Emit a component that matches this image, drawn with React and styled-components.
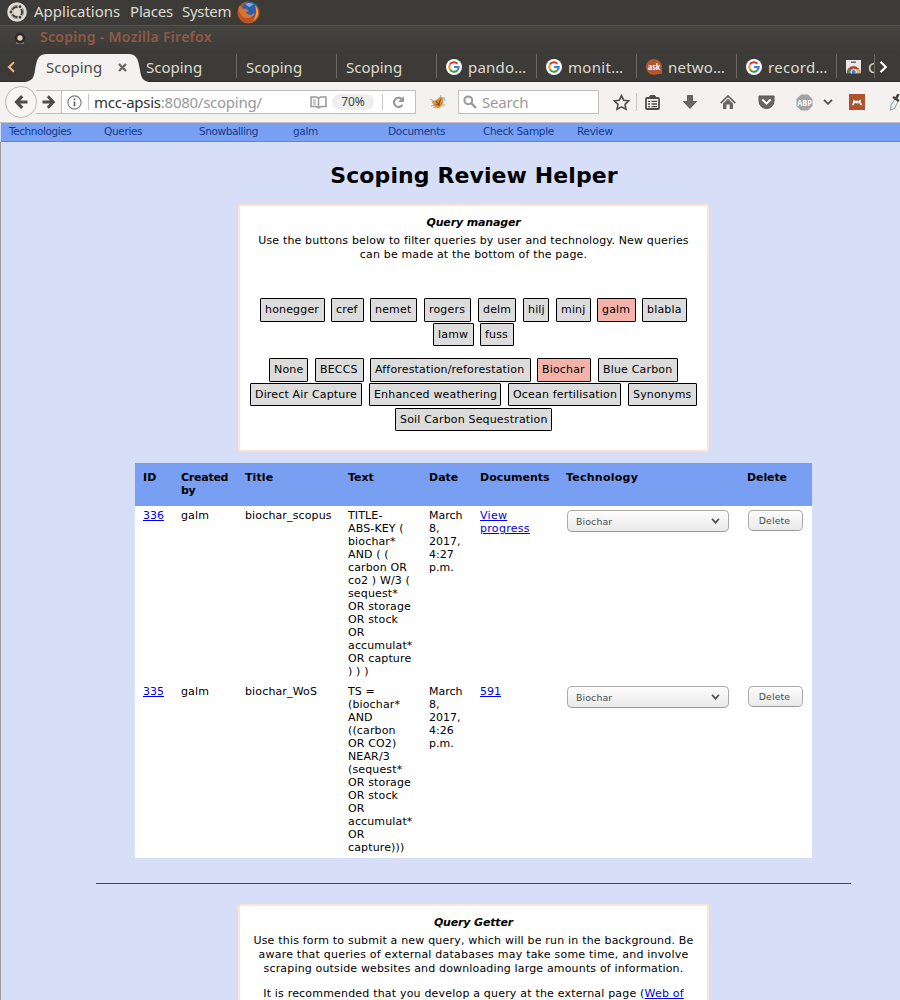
import React from 'react';
import styled, { createGlobalStyle, css } from 'styled-components';

const Global = createGlobalStyle`
  * { box-sizing: border-box; }
  body { margin: 0; width: 900px; height: 1000px; overflow: hidden; background: #d6dff7; font-family: "DejaVu Sans", sans-serif; }
  svg { display: block; flex: none; }
`;
const Screen = styled.div`width: 900px; height: 1000px; overflow: hidden; background: #d6dff7;`;
const ui = css`font-family: "Noto Sans", "Open Sans", sans-serif;`;
const Label = styled.span`
  display: block; flex: none; white-space: nowrap; width: ${p => p.$w}px; margin-left: ${p => p.$gap || 0}px;
  letter-spacing: ${p => p.$ls || 0}px;
`;
const Gap = styled.i`flex: none; width: ${p => p.$w}px;`;
const Panel = styled.header`
  ${ui} height: 25px; background: #3c3b37; color: #dfdbd2; display: flex; align-items: center; padding: 0 0 1px 7px; font-size: 15px; line-height: 20px;
  ${Label} { padding-bottom: 2px; }
`;
const TitleBar = styled.div`
  ${ui} height: 27px; display: flex; align-items: center; padding: 0 0 2px 14px; background: linear-gradient(#45443f, #3c3b37); border-top: 1px solid #55524b;
  color: #8f5a48; font-weight: 600; font-size: 14px; line-height: 20px;
  ${Label} { padding-bottom: 2px; }
`;
const Tabs = styled.div`
  ${ui} height: 30px; background: #3c3b37; color: #dfdbd2; font-size: 15px; display: flex; align-items: stretch; border-bottom: 1px solid #2a2926; line-height: 32px;
`;
const Scroll = styled.div`width: ${p => p.$w}px; flex: none; display: flex; align-items: center; padding-left: ${p => p.$pad}px;`;
const ActiveTab = styled.div`
  width: 113px; height: 30px; flex: none; display: flex; align-items: center; color: #4c4c4c; position: relative; padding-left: 22px; isolation: isolate;
  > svg:first-child { position: absolute; left: 0; top: 0; z-index: -1; }
`;
const Tab = styled.div`
  width: ${p => p.$w || 100}px; flex: none; display: flex; align-items: center; padding-left: 9px; overflow: hidden;
  border-right: 1px solid transparent; border-image: linear-gradient(transparent 10%, #6b6a66 10%, #6b6a66 86%, transparent 86%) 1;
`;
const Toolbar = styled.div`
  ${ui} height: 41px; background: #f3f2f1; border-bottom: 1px solid #c3c1be; display: flex; align-items: center; padding: 0 0 0 5px; overflow: hidden;
`;
const Back = styled.div`
  width: 32px; height: 32px; flex: none; border: 1px solid #bbb8b3; border-radius: 50%; background: #f7f6f5; display: flex; align-items: center; justify-content: center; z-index: 1;
`;
const UrlBar = styled.div`
  width: 380px; height: 24px; margin-left: -1px; flex: none; border: 1px solid #c1bfbb; border-left: 0; background: #fff; display: flex; align-items: center; font-size: 15px; color: #999;
`;
const Forward = styled.div`width: 26px; height: 22px; flex: none; background: #f7f6f5; border-right: 1px solid #c1bfbb; display: flex; align-items: center; padding-left: 5px;`;
const Dark = styled.span`color: #333;`;
const Zoom = styled.div`width: 42px; height: 16px; border-radius: 8px; background: #eee; color: #444; font-size: 12px; line-height: 16px; text-align: center; flex: none;`;
const Rule = styled.i`width: 1px; height: ${p => p.$h}px; background: #c9c7c4; flex: none;`;
const Search = styled.div`width: 141px; height: 24px; flex: none; border: 1px solid #c1bfbb; background: #fff; display: flex; align-items: center; color: #999; font-size: 15px; padding-left: 4px;`;
const Nav = styled.nav`
  height: 19px; background: #799ff2; border-bottom: 1px solid #5f86d8; color: #123a8c; display: flex; padding-left: 8px; font-size: 10.5px; line-height: 17px; margin-left: 1px;
`;
const Page = styled.main`border-left: 1px solid #9a9a9a; height: 858px; display: flex; flex-direction: column; align-items: flex-start; font-size: 11px; color: #000;`;
const Title = styled.h1`margin: 20px 0 0; width: 946px; text-align: center; font-size: 22px; line-height: 28px; height: 42px; flex: none; letter-spacing: 0.1px; white-space: nowrap;`;
const Box = styled.section`
  width: 471px; height: ${p => p.$h}px; margin-left: 237px; flex: none; background: #fff; border: 2px solid #ffe4cf; border-radius: 3px; padding-top: 10px; text-align: center;
`;
const BoxTitle = styled.h2`margin: 0 0 4px; font-size: 11px; line-height: 14px; font-style: italic; font-weight: bold; letter-spacing: -0.15px;`;
const Para = styled.p`margin: 0 -20px; line-height: 14px; white-space: nowrap; letter-spacing: 0.19px; & + & { margin-top: 11px; }`;
const Line = styled.span`display: block; letter-spacing: ${p => p.$ls ? p.$ls + 'px' : 'inherit'};`;
const Tags = styled.div`display: flex; margin: ${p => p.$top}px 0 0 ${p => p.$left}px;`;
const Tag = styled.span`
  display: block; flex: none; width: ${p => p.$w}px; height: ${p => p.$h}px; margin-right: ${p => p.$gap || 6}px; border: 1px solid #000; border-radius: 1px;
  background: ${p => p.$on ? '#f4b2a9' : '#dcdcdc'}; line-height: 21px; padding-left: 4px; text-align: left; white-space: nowrap; letter-spacing: 0.17px;
`;
const Table = styled.div`width: 677px; margin: 11px 0 0 134px; flex: none; line-height: 13px; background: #fff; letter-spacing: 0.14px;`;
const Row = styled.div`
  display: grid; grid-template-columns: 38px 64px 103px 81px 51px 86px 181px 73px; height: ${p => p.$head ? 43 : 176}px; padding-top: ${p => p.$head ? 8 : 3}px;
  background: ${p => p.$head ? '#799ff2' : '#fff'}; font-weight: ${p => p.$head ? 'bold' : 'normal'};
`;
const Cell = styled.div`padding-left: 8px; white-space: nowrap; letter-spacing: ${p => p.$ls === undefined ? 'inherit' : p.$ls + 'px'};`;
const Link = styled.a`color: #0000ee; text-decoration: underline;`;
const Control = styled.div`
  margin-top: 1px; margin-left: 1px; width: ${p => p.$w}px; height: ${p => p.$h}px; border: 1px solid #aaa; border-bottom-color: #999; border-radius: 5px;
  background: linear-gradient(#fdfdfd, #e9e9e9); color: #4c4c4c; font-size: 9.33px; display: flex; align-items: center; justify-content: ${p => p.$select ? 'space-between' : 'center'};
  padding: ${p => p.$select ? '0 8px' : '0 2px 0 0'};
`;
const Divider = styled.hr`width: 755px; height: 1px; border: 0; background: #4a4a4a; margin: 25px 0 20px 95px; flex: none;`;

const Svg = ({ w = 16, h = 16, children, ...r }) => <svg width={w} height={h} viewBox={`0 0 ${w} ${h}`} fill="none" {...r}>{children}</svg>;
const Ubuntu = () => <Svg w={20} h={20}><circle cx="10" cy="10" r="9.8" fill="#dfdbd2" /><circle cx="10" cy="10" r="5" stroke="#3c3b37" strokeWidth="2" /><circle cx="10" cy="10" r="6.6" stroke="#3c3b37" strokeWidth=".5" /><g fill="#3c3b37" stroke="#dfdbd2" strokeWidth="1.1"><circle cx="4" cy="10" r="2" /><circle cx="13" cy="4.8" r="2" /><circle cx="13" cy="15.2" r="2" /></g></Svg>;
const Firefox = () => <Svg w={23} h={23}><circle cx="11.5" cy="11.5" r="11" fill="#b95328" /><circle cx="12.7" cy="9" r="8" fill="#2b5fae" /><path d="M8 3c3-2 8-1 9 1-3-1-2 2-5 2z" fill="#76b2de" /><path d="M2 5c2 0 3 1 4 3 2-1 4 0 6 2l-3 1c1 3 5 4 9 1-1 5-9 7-13 3-3-3-4-6-3-10z" fill="#d9722e" /><path d="M18 4c5 5 4 13-2 16 3-4 4-10 2-16z" fill="#e8a33c" /></Svg>;
const Google = () => <Svg><circle cx="8" cy="8" r="8" fill="#fff" /><g strokeWidth="2.1"><path d="M4 5.5A4.7 4.7 0 0 1 11.4 4.7" stroke="#c5432e" /><path d="M4 5.5a4.7 4.7 0 0 0 0 5" stroke="#e8a33c" /><path d="M4 10.5a4.7 4.7 0 0 0 7.2 1" stroke="#3c9a55" /><path d="M8 8h4.7a4.7 4.7 0 0 1-1.5 3.5" stroke="#3f7fe0" /></g></Svg>;
const Ask = () => <Svg><circle cx="8" cy="8" r="8" fill="#b4552d" /><path d="M10 15h6V9z" fill="#b4552d" /><text x="8" y="10.6" textAnchor="middle" fontSize="8" fontWeight="700" fontFamily="Open Sans" textLength="12.5" lengthAdjust="spacingAndGlyphs" fill="#fff">ask</text></Svg>;
const Store = () => <Svg><path d="M0 1h15v13.5H0z" fill="#e8e8e8" /><path d="M5 3.2h5" stroke="#444" strokeWidth="1.2" /><path d="M.5 14.5a7 7.5 0 0 1 14 0z" fill="#b94a30" /><path d="M.8 14.5q0-3 1.7-5l3.7 5z" fill="#438f55" /><path d="M14.3 14.5q0-2.6-1.6-4.3H8.5l1 4.3z" fill="#e3b548" /><circle cx="7.6" cy="13" r="2.7" fill="#3f7fe0" stroke="#fff" /><path d="M0 14.5h16V16H0z" fill="#3c3b37" /></Svg>;
const Arrow = ({ flip }) => <Svg w={15} h={14} transform={flip ? 'scale(-1 1)' : undefined}><path d="M8.2 1.2 2.6 7l5.6 5.8M3 7h10.5" stroke="#4d4d4d" strokeWidth={flip ? 2.8 : 3.2} /></Svg>;
const Info = () => <Svg w={15} h={15}><circle cx="7.5" cy="7.5" r="6.6" stroke="#777" strokeWidth="1.1" /><path d="M7.5 6.6v4.6M7.5 3.6v1.7" stroke="#666" strokeWidth="1.7" /></Svg>;
const Reader = () => <Svg w={17} h={14}><path d="M1 2h5.5l2 1.3L10.5 2H16v9.5h-5l-2.5 1.3L6 11.5H1zM8.5 3v9" stroke="#999" strokeWidth="1.5" /><path d="M3 5h3M3 7h3M3 9h3" stroke="#999" /></Svg>;
const Reload = () => <Svg w={13} h={13}><path d="M10.5 8.8A4.6 4.6 0 1 1 9.7 3" stroke="#999" strokeWidth="2.1" /><path d="M12 0v6H6z" fill="#999" /></Svg>;
const Bug = () => <Svg w={17} h={16}><path d="M1 5l5 3M12 1l-2 5M15 3l1 4M2 12l4-1M14 13l2-3M4 13l3 1" stroke="#a5a5a5" strokeWidth=".9" /><path d="M2.5 7.5 7 6l5-3.5L14.5 4l-.7 7-4 3.5-4-1.5z" fill="#d5963d" /><path d="M7 7l4 4M11.5 5l-2 7M6.5 11l4-1.5" stroke="#984e25" strokeWidth="1.2" /></Svg>;
const Magnifier = () => <Svg w={14} h={14}><circle cx="5.3" cy="5.3" r="3.9" stroke="#999" strokeWidth="2" /><path d="M8.2 8.2 13 13" stroke="#999" strokeWidth="2.4" /></Svg>;
const Star = () => <Svg w={17} h={17}><path d="M8.5 1.6l2.2 4.6 5 .6-3.7 3.5 1 5-4.5-2.5L4 15.3l1-5L1.3 6.8l5-.6z" stroke="#4d4d4d" strokeWidth="1.6" /></Svg>;
const Clip = () => <Svg w={15} h={15}><rect x="1" y="3" width="13" height="11" rx="1" stroke="#4d4d4d" strokeWidth="1.8" /><path d="M4.5 2.2a3 2.3 0 0 1 6 0z" fill="#4d4d4d" stroke="#4d4d4d" /><path d="M3 6.4h2M6.5 6.4H12M3 9h2M6.5 9H12M3 11.6h2M6.5 11.6H12" stroke="#4d4d4d" strokeWidth="1.3" /></Svg>;
const Down = () => <Svg w={14} h={14}><path d="M4.5.5h5v6h4L7 13.5.5 6.5h4z" fill="#666" stroke="#4d4d4d" strokeWidth=".8" /></Svg>;
const Home = () => <Svg w={16} h={15}><path d="M.8 8 8 1l7.2 7" stroke="#555" strokeWidth="1.6" /><path d="M3 8.6l5-4.8 5 4.8V14H9.7V9.5H6.4V14H3z" fill="#666" /></Svg>;
const Pocket = () => <Svg w={17} h={15}><path d="M1 1h15v5a7.5 7.5 0 0 1-15 0z" fill="#666" stroke="#555" /><path d="M4.3 4.5 8.5 8.6l4.2-4.1" stroke="#fff" strokeWidth="2" /></Svg>;
const Abp = () => <Svg w={17} h={17}><path d="M5 .5h7l4.5 4.5v7L12 16.5H5L.5 12V5z" fill="#a3a3a3" /><text x="8.5" y="11.6" textAnchor="middle" fontSize="8.5" fontWeight="700" fontFamily="Open Sans" textLength="14.5" lengthAdjust="spacingAndGlyphs" fill="#fff">ABP</text></Svg>;
const Chevron = ({ c = '#4d4d4d', w = 10, s = 1.7 }) => <Svg w={w} h={6}><path d={`M1 .8 ${w / 2} 4.8 ${w - 1} .8`} stroke={c} strokeWidth={s} /></Svg>;
const Mendeley = () => <Svg><path d="M0 0h16v16H0z" fill="#ad532d" /><path d="M4.2 10.4q1.3-1 .8-3.6 1.2.4 1.6 2.2M9.4 9q.4-1.800 1.600-2.200-.5 2.600.8 3.600" stroke="#fff" strokeWidth="1.5" /><circle cx="8" cy="8" r="1.5" fill="#fff" /><circle cx="4" cy="10.200" r="1" fill="#fff" /><circle cx="12" cy="10.200" r="1" fill="#fff" /></Svg>;
const Dropper = () => <Svg w={16} h={17}><path d="M1.500 16l.5-5 4-6 3.500 1.500-4 8z" fill="#e6f0f5" stroke="#8b9ba3" /><path d="M4 3l6 4M7 5l2.500-5" stroke="#444" strokeWidth="2.6" /></Svg>;
const Side = ({ right, c }) => <Svg w={9} h={14}><path d={right ? 'M1.500 1.800 6.800 7l-5.300 5.200' : 'M7 2.200 2 7l5 4.800'} stroke={c} strokeWidth="2.100" /></Svg>;

const users = [[['honegger', 65], ['cref', 33], ['nemet', 47, 7], ['rogers', 47, 7], ['delm', 38, 7], ['hilj', 26, 7], ['minj', 35], ['galm', 39], ['blabla', 45]], [['lamw', 41], ['fuss', 34]]];
const techs = [[['None', 39, 7], ['BECCS', 49], ['Afforestation/reforestation', 161], ['Biochar', 54, 7], ['Blue Carbon', 80]], [['Direct Air Capture', 112, 7], ['Enhanced weathering', 132, 7], ['Ocean fertilisation', 113, 7], ['Synonyms', 69]], [['Soil Carbon Sequestration', 157]]];
const TagRow = ({ items, top, left, h }) => <Tags $top={top} $left={left}>{items.map(([t, w, g]) => <Tag key={t} $w={w} $gap={g} $h={h} $on={t === 'galm' || t === 'Biochar'}>{t}</Tag>)}</Tags>;
const Lines = ({ items }) => items.map((t, i) => <Line key={i}>{t}</Line>);
const rows = [
  { id: '336', title: 'biochar_scopus', text: ['TITLE-', 'ABS-KEY (', 'biochar*', 'AND ( (', 'carbon OR', 'co2 ) W/3 (', 'sequest*', 'OR storage', 'OR stock', 'OR', 'accumulat*', 'OR capture', ') ) )'], time: '4:27', docs: ['View', 'progress'] },
  { id: '335', title: 'biochar_WoS', text: ['TS =', '(biochar*', 'AND', '((carbon', 'OR CO2)', 'NEAR/3', '(sequest*', 'OR storage', 'OR stock', 'OR', 'accumulat*', 'OR', 'capture)))'], time: '4:26', docs: ['591'] },
];
const heads = [['Title', 0.1], ['Text', 0], ['Date', 0], ['Documents', 0], ['Technology', 0.25], ['Delete', -0.1]];
const nav = [['Technologies', 95, -0.42], ['Queries', 95, -0.33], ['Snowballing', 94, -0.4], ['galm', 95, -0.3], ['Documents', 95, -0.3], ['Check Sample', 94, -0.35], ['Review', 60, -0.3]];

export default function App() {
  return <Screen><Global />
    <Panel><Ubuntu /><Label $gap={7} $w={90}>Applications</Label><Label $gap={6} $w={46} $ls={-0.2}>Places</Label><Label $gap={6} $w={54} $ls={-0.3}>System</Label><Gap $w={1} /><Firefox /></Panel>
    <TitleBar><Svg w={12} h={12}><path d="M2 10h8v2H2z" fill="#777" /><circle cx="6" cy="6" r="5.2" fill="#292825" /><circle cx="6" cy="6" r="2.7" fill="#e9c9bd" /></Svg><Label $gap={14} $w={200} $ls={0.3}>Scoping - Mozilla Firefox</Label></TitleBar>
    <Tabs><Scroll $w={24} $pad={7}><Side c="#e7b878" /></Scroll>
      <ActiveTab><Svg w={125} h={30}><path d="M1 30c7-1 9-4 10-12C13 7 14 2 23 2h81c9 0 10 5 12 16 1 8 3 11 9 12z" fill="#f3f2f1" /></Svg><Label $w={60}>Scoping</Label><Gap $w={12} /><Svg w={9} h={9}><path d="M1 1l7 7M8 1 1 8" stroke="#666" strokeWidth="2.3" /></Svg></ActiveTab>
      <Tab><Label $w={60}>Scoping</Label></Tab><Tab><Label $w={60}>Scoping</Label></Tab><Tab><Label $w={60}>Scoping</Label></Tab>
      <Tab><Google /><Label $w={64} $gap={6} $ls={0.2}>pando…</Label></Tab><Tab><Google /><Label $w={64} $gap={6} $ls={0.3}>monit…</Label></Tab><Tab><Ask /><Label $w={64} $gap={6} $ls={0.2}>netwo…</Label></Tab><Tab><Google /><Label $w={64} $gap={6} $ls={0.3}>record…</Label></Tab>
      <Tab $w={38}><Store /><Label $w={5} $gap={6}>C</Label></Tab><Scroll $w={20} $pad={4}><Side right c="#fff" /></Scroll>
    </Tabs>
    <Toolbar><Back><Arrow /></Back><UrlBar><Forward><Arrow flip /></Forward><Gap $w={5} /><Info /><Gap $w={6} /><Rule $h={16} /><Gap $w={5} /><Label $w={216} $ls={-0.26}><Dark>mcc-apsis</Dark>:8080/scoping/</Label><Reader /><Gap $w={5} /><Zoom>70%</Zoom><Gap $w={8} /><Rule $h={16} /><Gap $w={9} /><Reload /></UrlBar>
      <Gap $w={13} /><Bug /><Gap $w={12} /><Search><Magnifier /><Label $gap={5} $w={60} $ls={-0.2}>Search</Label></Search>
      <Gap $w={14} /><Star /><Gap $w={6} /><Rule $h={18} /><Gap $w={8} /><Clip /><Gap $w={23} /><Down /><Gap $w={23} /><Home /><Gap $w={22} /><Pocket /><Gap $w={21} /><Abp /><Gap $w={10} /><Chevron /><Gap $w={16} /><Mendeley /><Gap $w={24} /><Dropper />
    </Toolbar>
    <Nav>{nav.map(([t, w, ls]) => <Label key={t} $w={w} $ls={ls}>{t}</Label>)}</Nav>
    <Page>
      <Title>Scoping Review Helper</Title>
      <Box $h={248}><BoxTitle>Query manager</BoxTitle><Para><Line $ls={0.16}>Use the buttons below to filter queries by user and technology. New queries</Line><Line $ls={0.16}>can be made at the bottom of the page.</Line></Para>
        <TagRow items={users[0]} top={36} left={20} h={24} /><TagRow items={users[1]} top={1} left={193} h={23} />
        <TagRow items={techs[0]} top={12} left={29} h={24} /><TagRow items={techs[1]} top={1} left={10} h={23} /><TagRow items={techs[2]} top={2} left={155} h={23} />
      </Box>
      <Table><Row $head><Cell>ID</Cell><Cell $ls={-0.25}>Created<br />by</Cell>{heads.map(([t, ls]) => <Cell key={t} $ls={ls}>{t}</Cell>)}</Row>
        {rows.map(r => <Row key={r.id}><Cell $ls={0}><Link>{r.id}</Link></Cell><Cell>galm</Cell><Cell>{r.title}</Cell><Cell><Lines items={r.text} /></Cell><Cell $ls={0}><Lines items={['March', '8,', '2017,', r.time, 'p.m.']} /></Cell><Cell $ls={r.docs.length > 1 ? 0.3 : 0}><Link><Lines items={r.docs} /></Link></Cell><Cell><Control $w={162} $h={22} $select>Biochar<Chevron w={9} /></Control></Cell><Cell><Control $w={55} $h={21}>Delete</Control></Cell></Row>)}
      </Table>
      <Divider />
      <Box $h={130}><BoxTitle>Query Getter</BoxTitle><Para><Line>Use this form to submit a new query, which will be run in the background. Be</Line><Line $ls={0.22}>aware that queries of external databases may take some time, and involve</Line><Line $ls={0.16}>scraping outside websites and downloading large amounts of information.</Line></Para><Para>It is recommended that you develop a query at the external page (<Link>Web of</Link></Para></Box>
    </Page>
  </Screen>;
}
